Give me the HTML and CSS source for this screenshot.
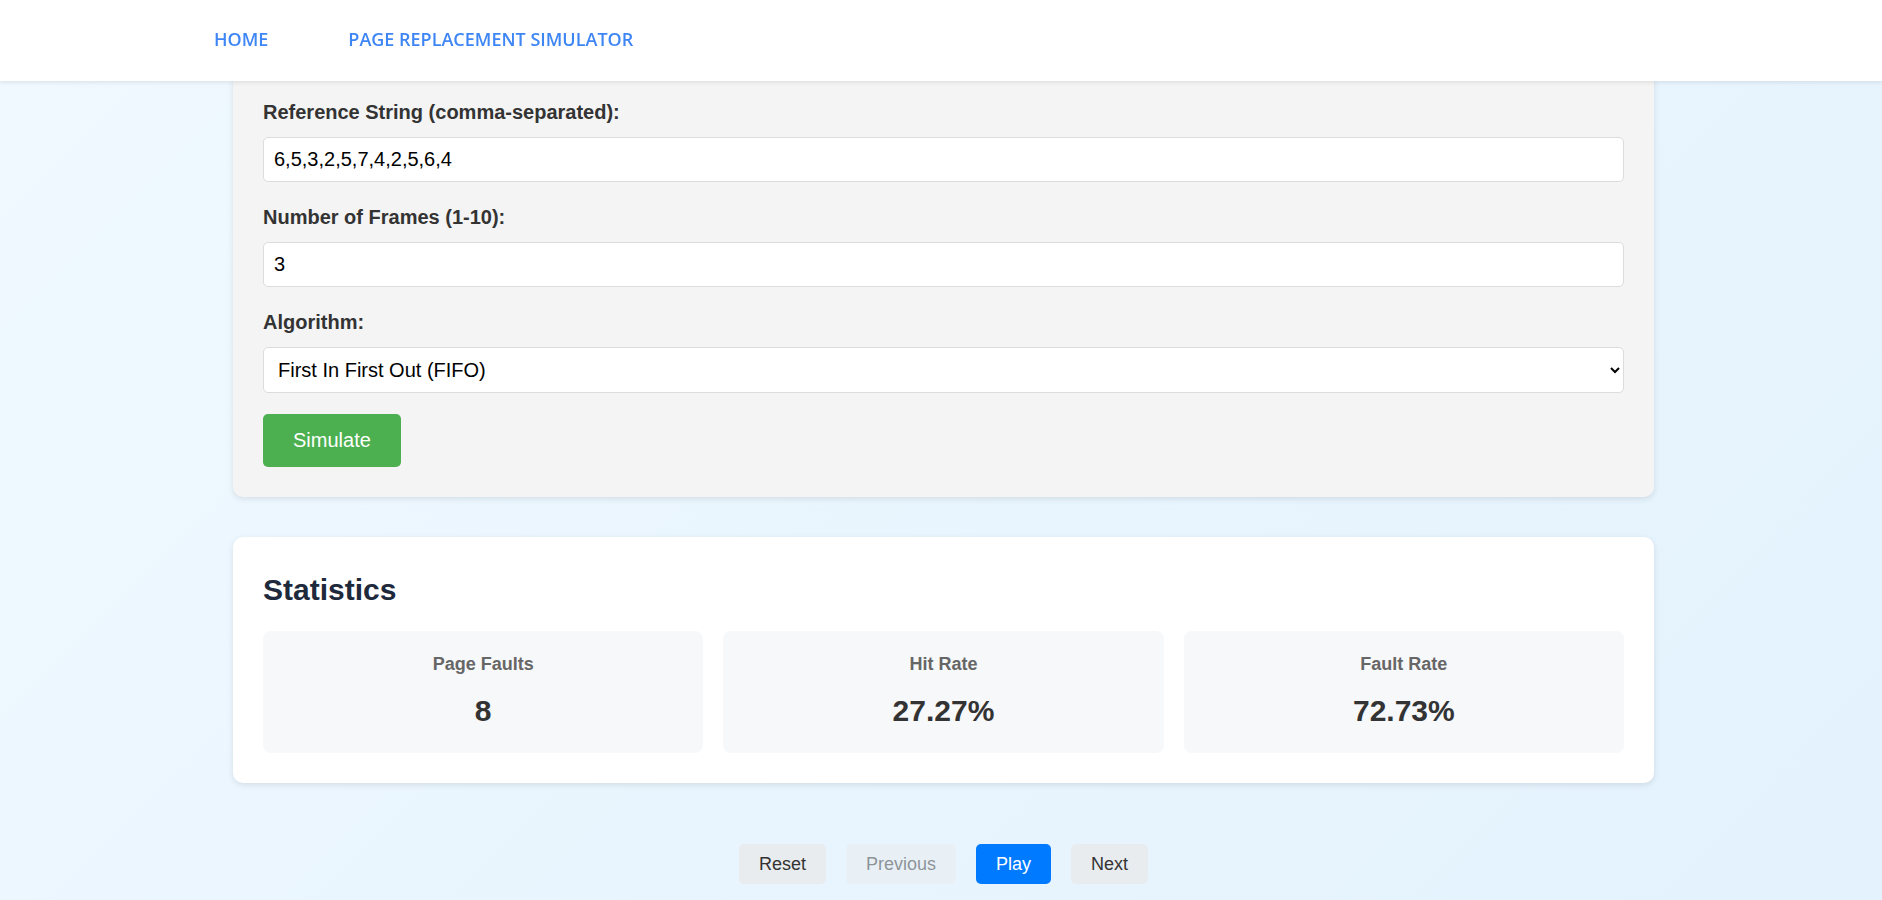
FILE: index.html
```html
<!DOCTYPE html>
<html lang="en">
<head>
<meta charset="utf-8">
<title>Page Replacement Simulator</title>
<link rel="stylesheet" href="styles.css">
</head>
<body>
<nav class="navbar">
  <a class="nav-link" href="#">Home</a>
  <a class="nav-link" href="#">Page Replacement Simulator</a>
</nav>
<main class="container">
  <section class="card form-card">
    <div class="form-group">
      <label class="form-label" for="ref">Reference String (comma-separated):</label>
      <input class="form-input" id="ref" type="text" value="6,5,3,2,5,7,4,2,5,6,4">
    </div>
    <div class="form-group">
      <label class="form-label" for="frames">Number of Frames (1-10):</label>
      <input class="form-input" id="frames" type="text" value="3">
    </div>
    <div class="form-group last">
      <label class="form-label" for="algo">Algorithm:</label>
      <select class="form-select" id="algo">
        <option>First In First Out (FIFO)</option>
        <option>Least Recently Used (LRU)</option>
        <option>Optimal (OPT)</option>
      </select>
    </div>
    <button class="btn-simulate" type="button">Simulate</button>
  </section>

  <section class="card stats-card">
    <h2 class="stats-title">Statistics</h2>
    <div class="stats-grid">
      <div class="stat-box">
        <div class="stat-label">Page Faults</div>
        <div class="stat-value">8</div>
      </div>
      <div class="stat-box">
        <div class="stat-label">Hit Rate</div>
        <div class="stat-value">27.27%</div>
      </div>
      <div class="stat-box">
        <div class="stat-label">Fault Rate</div>
        <div class="stat-value">72.73%</div>
      </div>
    </div>
  </section>

  <div class="controls">
    <button class="ctrl-btn" type="button">Reset</button>
    <button class="ctrl-btn" type="button" disabled>Previous</button>
    <button class="ctrl-btn primary" type="button">Play</button>
    <button class="ctrl-btn" type="button">Next</button>
  </div>
</main>
</body>
</html>
```

FILE: styles.css
```css
* {
  box-sizing: border-box;
}

html, body {
  margin: 0;
  min-height: 100%;
}

body {
  font-family: "Liberation Sans", Arial, sans-serif;
  color: #333;
  background: linear-gradient(135deg, #f0f9ff 0%, #e3f2fd 100%) fixed;
  min-height: 900px;
  padding-left: 5px;
}

.navbar {
  position: fixed;
  top: 0;
  left: 0;
  right: 0;
  height: 81px;
  background: #ffffff;
  box-shadow: 0 2px 4px rgba(0, 0, 0, 0.08);
  display: flex;
  align-items: center;
  padding-left: 174px;
  padding-bottom: 3px;
  z-index: 10;
}

.nav-link {
  font-family: "Open Sans", "Noto Sans", sans-serif;
  font-weight: 600;
  font-size: 18px;
  text-transform: uppercase;
  color: #3f86f5;
  text-decoration: none;
  padding: 0 40px;
  line-height: 24px;
}

.container {
  width: 1421px;
  margin: 0 auto;
  padding-top: 71px;
  padding-bottom: 17px;
}

.card {
  border-radius: 10px;
  box-shadow: 0 2px 6px rgba(0, 0, 0, 0.1);
  padding: 30px;
}

.form-card {
  background: #f4f4f4;
}

.form-group {
  margin-bottom: 24px;
}

.form-group.last {
  margin-bottom: 21px;
}

.form-label {
  display: block;
  font-weight: bold;
  font-size: 20px;
  line-height: 23px;
  color: #333;
  margin-bottom: 13px;
}

.form-input,
.form-select {
  display: block;
  width: 100%;
  font-family: "Liberation Sans", Arial, sans-serif;
  font-size: 20px;
  color: #000;
  background: #ffffff;
  border: 1px solid #dcdcdc;
  border-radius: 5px;
  padding: 0 10px;
  outline: none;
}

.form-input {
  height: 45px;
}

.form-select {
  height: 46px;
}

.btn-simulate {
  display: block;
  font-family: "Liberation Sans", Arial, sans-serif;
  font-size: 20px;
  line-height: 23px;
  color: #ffffff;
  background: #4caf50;
  border: none;
  border-radius: 5px;
  padding: 15px 30px;
  cursor: pointer;
}

.stats-card {
  background: #ffffff;
  margin-top: 40px;
}

.stats-title {
  margin: 6px 0 24px;
  font-size: 30px;
  line-height: 34px;
  font-weight: bold;
  color: #1e293b;
}

.stats-grid {
  display: grid;
  grid-template-columns: repeat(3, 1fr);
  gap: 20px;
}

.stat-box {
  background: #f7f8fa;
  border-radius: 8px;
  padding: 23px 20px 25px;
  text-align: center;
}

.stat-label {
  font-size: 18px;
  line-height: 21px;
  font-weight: bold;
  color: #666;
  margin-bottom: 19px;
}

.stat-value {
  font-size: 30px;
  line-height: 34px;
  font-weight: bold;
  color: #333;
}

.controls {
  display: flex;
  justify-content: center;
  gap: 20px;
  margin-top: 61px;
}

.ctrl-btn {
  font-family: "Liberation Sans", Arial, sans-serif;
  font-size: 18px;
  line-height: 20px;
  padding: 10px 20px;
  border: none;
  border-radius: 5px;
  background: #e9ecef;
  color: #333;
  cursor: pointer;
}

.ctrl-btn:disabled {
  opacity: 0.5;
  cursor: default;
}

.ctrl-btn.primary {
  background: #007bff;
  color: #ffffff;
}
```
